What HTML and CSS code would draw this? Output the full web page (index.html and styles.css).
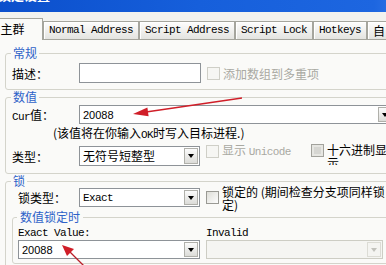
FILE: index.html
```html
<!DOCTYPE html>
<html lang="zh-CN">
<head>
<meta charset="utf-8">
<title>锁定设置</title>
<link rel="stylesheet" href="styles.css">
</head>
<body>
<div class="win">
  <div class="titlebar"><span class="title">锁定设置</span></div>
  <div class="tabs">
    <div class="tab sel">主群</div>
    <div class="tab lat">Normal Address</div>
    <div class="tab lat">Script Address</div>
    <div class="tab lat">Script Lock</div>
    <div class="tab lat">Hotkeys</div>
    <div class="tab">自</div>
  </div>
  <div class="panel">
    <fieldset class="grp g1">
      <legend>常规</legend>
      <div class="row">
        <span class="lbl">描述：</span>
        <div class="edit"></div>
        <span class="chk dis"><i class="box"></i><span class="txt">添加数组到多重项</span></span>
      </div>
    </fieldset>
    <fieldset class="grp g2">
      <legend>数值</legend>
      <div class="row">
        <span class="lbl"><span class="lat">Cur</span>值：</span>
        <div class="combo wide"><span class="val num">20088</span><span class="drop"><i class="tri"></i></span></div>
      </div>
      <div class="note">(该值将在你输入<span class="lat">OK</span>时写入目标进程.)</div>
      <div class="row r-type">
        <span class="lbl">类型：</span>
        <div class="combo"><span class="val">无符号短整型</span><span class="drop"><i class="tri"></i></span></div>
        <span class="chk dis top uni"><i class="box"></i><span class="txt">显示 <span class="lat">Unicode</span></span></span>
        <span class="chk top hex"><i class="box gray"></i><span class="txt">十六进制显示</span></span>
      </div>
    </fieldset>
    <fieldset class="grp g3">
      <legend>锁</legend>
      <div class="row">
        <span class="lbl ind">锁类型：</span>
        <div class="combo"><span class="val lat">Exact</span><span class="drop"><i class="tri"></i></span></div>
        <span class="chk two"><i class="box"></i><span class="txt">锁定的 (期间检查分支项同样锁定)</span></span>
      </div>
      <fieldset class="grp inner">
        <legend>数值锁定时</legend>
        <div class="cols">
          <div class="col c1">
            <div class="cap lat">Exact Value:</div>
            <div class="combo full"><span class="val num">20088</span><span class="drop"><i class="tri"></i></span></div>
          </div>
          <div class="col c2">
            <div class="cap lat">Invalid</div>
            <div class="combo full disabled"><span class="val"></span><span class="drop"><i class="tri"></i></span></div>
          </div>
        </div>
      </fieldset>
    </fieldset>
  </div>
</div>
<svg class="marks" width="386" height="265" viewBox="0 0 386 265">
  <line x1="242" y1="98" x2="146" y2="112" stroke="#d01e28" stroke-width="1.3"/>
  <polygon points="133,114 147.4,107.6 148.6,116.2" fill="#d01e28"/>
  <line x1="86" y1="268" x2="70" y2="252" stroke="#b81e28" stroke-width="1.3"/>
  <polygon points="62,245 74,249 67,256" fill="#d01e28"/>
</svg>
</body>
</html>
```

FILE: styles.css
```css
* { box-sizing: border-box; }

body {
  margin: 0;
  width: 386px;
  height: 265px;
  overflow: hidden;
  position: relative;
  background: #f2f2ef;
  font-family: "Noto Sans CJK SC", sans-serif;
  font-size: 12px;
  color: #000;
}

.win { width: 440px; }

.lat {
  font-family: "Liberation Mono", "Noto Sans CJK SC", monospace;
  font-size: 11px;
  letter-spacing: -0.6px;
}

.num {
  font-family: "Liberation Sans", sans-serif;
  font-size: 11px;
}

.titlebar {
  height: 12px;
  overflow: hidden;
  background: linear-gradient(90deg, #0b4fcc 0%, #165fdb 45%, #1d66e0 85%, #4a8aee 100%);
}

.title {
  display: block;
  margin: -13px 0 0 -2px;
  color: #fff;
  font-weight: bold;
  font-size: 13px;
  line-height: 16px;
}

.tabs {
  display: flex;
  align-items: flex-end;
  height: 21px;
  margin-top: 6px;
  position: relative;
  z-index: 2;
}

.tab {
  height: 18px;
  padding: 0 5px;
  border: 1px solid #a5a59d;
  border-bottom: 0;
  background: linear-gradient(#fdfdfd, #e4e4e0);
  box-shadow: inset 1px 1px 0 #fff;
  line-height: 17px;
  white-space: nowrap;
}

.tab.sel {
  width: 61px;
  margin-left: -18px;
  height: 22px;
  margin-bottom: -1px;
  text-align: center;
  background: #fafaf8;
  box-shadow: none;
  line-height: 20px;
  font-size: 12px;
}

.panel {
  border-top: 1px solid #a5a59d;
  background: #fafaf8;
  padding: 6px 0 0 5px;
  height: 240px;
}

.grp {
  margin: 0;
  min-width: 0;
  border: 1px solid #d4d4cb;
  border-radius: 3px;
  padding: 3px 0 6px 6px;
}

.grp legend {
  padding: 0 2px;
  margin-left: -1px;
  color: #2e62c8;
  font-size: 12px;
  line-height: 14px;
}

.g2 { padding: 1px 0 7px 6px; }
.g3 { padding: 0 0 6px 6px; }

.row {
  display: flex;
  align-items: center;
}

.lbl {
  width: 67px;
  flex: none;
  white-space: nowrap;
}

.lbl.ind { padding-left: 6px; }

.edit {
  width: 122px;
  height: 20px;
  border: 1px solid #8e9398;
  background: #fff;
  flex: none;
}

.combo {
  display: flex;
  align-items: center;
  width: 121px;
  height: 19px;
  flex: none;
  border: 1px solid #8e9398;
  background: #fff;
  padding-left: 3px;
}

.r-type .combo { height: 20px; }

.combo.wide { width: 315px; }
.combo.full { width: 100%; }

.combo .val {
  flex: 1;
  white-space: nowrap;
  overflow: hidden;
  line-height: 16px;
}

.drop {
  width: 14px;
  align-self: stretch;
  margin: 1px;
  border: 1px solid #b0b0aa;
  background: linear-gradient(#fbfbfb, #dcdcd8);
  display: flex;
  align-items: center;
  justify-content: center;
}

.tri {
  width: 0;
  height: 0;
  border-left: 3.5px solid transparent;
  border-right: 3.5px solid transparent;
  border-top: 4px solid #000;
}

.combo.disabled {
  background: #f5f5f2;
  border-color: #cdcdc4;
}

.combo.disabled .drop {
  border-color: #dcdcd5;
  background: #f4f4f1;
}

.combo.disabled .tri { border-top-color: #c2c2bc; }

.chk {
  display: flex;
  align-items: center;
  margin-left: 6px;
  white-space: nowrap;
  line-height: 14px;
}

.box {
  width: 13px;
  height: 13px;
  flex: none;
  margin-right: 3px;
  border: 1px solid #9a9a94;
  background: linear-gradient(135deg, #deded8, #fdfdfd);
}

.box.gray {
  border-color: #a2a29c;
  background: #d6d6d2;
  box-shadow: inset 0 0 0 2px #e6e6e2;
}

.chk.dis { color: #a9a9a2; }

.chk.dis .box {
  border-color: #cfcfc7;
  background: #f6f6f3;
}

.chk.top {
  align-self: flex-start;
  margin-top: -3px;
}

.chk.uni { width: 99px; }

.chk.hex {
  height: 22px;
  overflow: hidden;
  align-items: flex-start;
  margin-left: 6px;
}

.chk.hex .box { margin-top: 1px; }

.chk .txt {
  white-space: normal;
  line-height: 13px;
}

.chk.uni .txt { white-space: pre; }

.chk.hex .txt { width: 62px; }

.chk.two {
  margin-top: -4px;
  margin-bottom: -4px;
}

.chk.two .txt { width: 168px; }

.note {
  margin: 2px 0 0 41px;
  line-height: 14px;
  white-space: nowrap;
}

.r-type { margin-top: 4px; }

.inner {
  margin-top: 3px;
  padding: 3px 0 4px 5px;
}

.inner legend { padding: 0 3px; }

.cols {
  display: flex;
  gap: 6px;
}

.c1 { width: 182px; }
.c2 { width: 177px; }

.cap {
  height: 13px;
  line-height: 13px;
  white-space: nowrap;
}

.marks {
  position: absolute;
  left: 0;
  top: 0;
  pointer-events: none;
}
```
